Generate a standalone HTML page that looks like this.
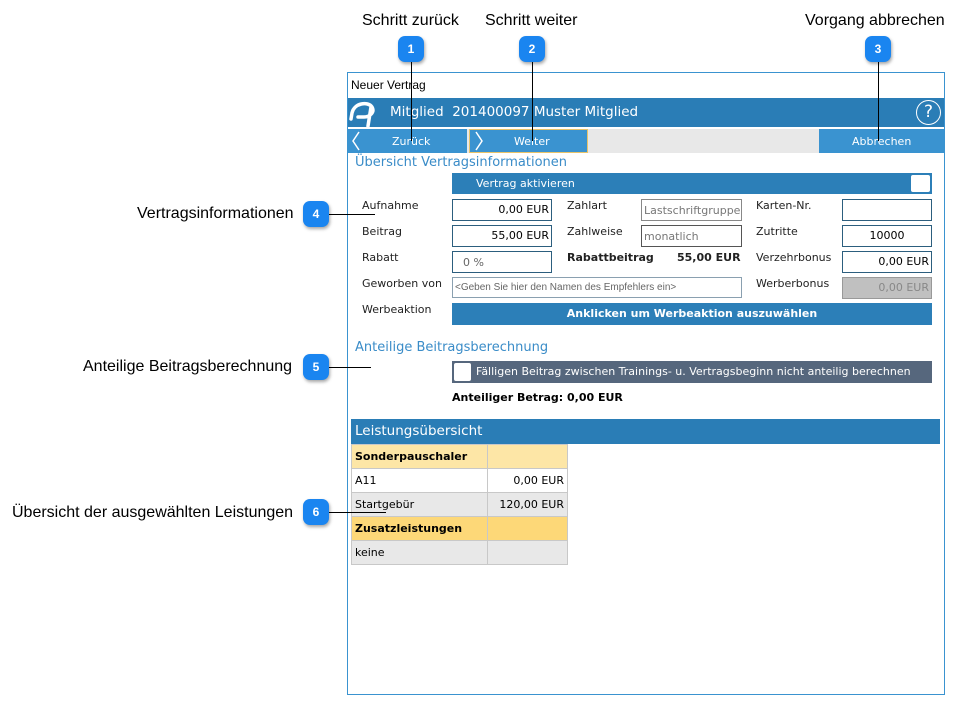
<!DOCTYPE html>
<html><head><meta charset="utf-8"><style>
*{margin:0;padding:0;box-sizing:border-box}
body{width:965px;height:704px;background:#fff;position:relative;font-family:"DejaVu Sans","Liberation Sans",sans-serif;overflow:hidden}
.a{position:absolute}
.lbl{font-family:"Liberation Sans",sans-serif;font-size:16px;color:#000;white-space:nowrap}
.badge{position:absolute;width:26px;height:26px;border-radius:7px;background:#1a85f0;color:#fff;font:bold 12px "Liberation Sans",sans-serif;text-align:center;line-height:26px;box-shadow:1px 2px 3px rgba(0,0,0,.35)}
.ln{position:absolute;background:#000}
.t{position:absolute;font-size:11px;color:#222;white-space:nowrap}
.in{position:absolute;height:22px;border:1px solid #2c5e7e;background:#fff;font-size:11px;line-height:20px;padding:0 2px;white-space:nowrap;overflow:hidden}
.r{text-align:right}
td{font-size:11px;height:24px;border:1px solid #c8c8c8;padding:0 3px;white-space:nowrap}
</style></head><body>
<div class="a lbl" style="left:362px;top:12px">Schritt zurück</div>
<div class="a lbl" style="left:485px;top:12px">Schritt weiter</div>
<div class="a lbl" style="left:805px;top:12px">Vorgang abbrechen</div>
<div class="a lbl" style="left:137px;top:205px">Vertragsinformationen</div>
<div class="a lbl" style="left:83px;top:358px">Anteilige Beitragsberechnung</div>
<div class="a lbl" style="left:12px;top:504px">Übersicht der ausgewählten Leistungen</div>

<div class="a" style="left:347px;top:72px;width:598px;height:623px;border:1px solid #3a93d0"></div>
<div class="t" style="left:351px;top:78px;font-family:'Liberation Sans',sans-serif;font-size:12px;color:#000">Neuer Vertrag</div>
<div class="a" style="left:348px;top:98px;width:596px;height:29px;background:#2a7db6"></div>
<svg class="a" style="left:348px;top:99px" width="30" height="28"><path d="M4 14 C6 4 20 2 24 8 C27 13 22 18 16 18 L10 18 M23 8 L20 27 M4 14 L3 20" stroke="#fff" stroke-width="3.5" fill="none" stroke-linecap="round"/></svg>
<div class="t" style="left:390px;top:104px;font-size:13.5px;color:#fff">Mitglied&nbsp; 201400097 Muster Mitglied</div>
<div class="a" style="left:916px;top:100px;width:25px;height:25px;border:1.5px solid #fff;border-radius:50%;color:#fff;font-size:17px;text-align:center;line-height:22px">?</div>
<div class="a" style="left:348px;top:129px;width:596px;height:24px;background:#e8e8e8"></div>
<div class="a" style="left:348px;top:129px;width:119px;height:24px;background:#3a93d0"></div>
<div class="a" style="left:469px;top:129px;width:119px;height:24px;background:#3a93d0;border:1px solid #e8c36a"></div>
<div class="a" style="left:819px;top:129px;width:125px;height:24px;background:#3a93d0"></div>
<svg class="a" style="left:350px;top:130px" width="12" height="22"><path d="M9 2 L3 11 L9 20" stroke="#fff" stroke-width="1.5" fill="none"/></svg>
<svg class="a" style="left:473px;top:130px" width="12" height="22"><path d="M3 2 L9 11 L3 20" stroke="#fff" stroke-width="1.5" fill="none"/></svg>
<div class="t" style="left:392px;top:135px;color:#fff">Zurück</div>
<div class="t" style="left:514px;top:135px;color:#fff">Weiter</div>
<div class="t" style="left:852px;top:135px;color:#fff">Abbrechen</div>

<div class="t" style="left:355px;top:155px;font-size:13px;color:#3a8cc8">Übersicht Vertragsinformationen</div>
<div class="a" style="left:452px;top:173px;width:480px;height:21px;background:#2c7fb8"></div>
<div class="t" style="left:476px;top:177px;color:#fff">Vertrag aktivieren</div>
<div class="a" style="left:911px;top:175px;width:19px;height:17px;background:#fff;border-radius:2px"></div>

<div class="t" style="left:362px;top:199px">Aufnahme</div>
<div class="t" style="left:362px;top:225px">Beitrag</div>
<div class="t" style="left:362px;top:251px">Rabatt</div>
<div class="t" style="left:362px;top:277px">Geworben von</div>
<div class="t" style="left:362px;top:303px">Werbeaktion</div>
<div class="in r" style="left:452px;top:199px;width:100px">0,00 EUR</div>
<div class="in r" style="left:452px;top:225px;width:100px">55,00 EUR</div>
<div class="in" style="left:452px;top:251px;width:100px;color:#666;padding-left:10px;line-height:22px">0 %</div>
<div class="in" style="left:452px;top:277px;width:290px;height:21px;border-color:#8aa0b0;color:#666;font-size:10px;font-family:'Liberation Sans',sans-serif">&lt;Geben Sie hier den Namen des Empfehlers ein&gt;</div>
<div class="a" style="left:452px;top:303px;width:480px;height:22px;background:#2c7fb8;color:#fff;font-size:11px;font-weight:bold;text-align:center;line-height:22px">Anklicken um Werbeaktion auszuwählen</div>

<div class="t" style="left:567px;top:199px">Zahlart</div>
<div class="t" style="left:567px;top:225px">Zahlweise</div>
<div class="t" style="left:567px;top:251px;font-weight:bold">Rabattbeitrag</div>
<div class="t" style="left:677px;top:251px;font-weight:bold">55,00 EUR</div>
<div class="in" style="left:641px;top:199px;width:101px;border-color:#888;color:#777;line-height:22px">Lastschriftgruppe</div>
<div class="in" style="left:641px;top:225px;width:101px;border-color:#555;color:#777;line-height:22px">monatlich</div>

<div class="t" style="left:756px;top:199px">Karten-Nr.</div>
<div class="t" style="left:756px;top:225px">Zutritte</div>
<div class="t" style="left:756px;top:251px">Verzehrbonus</div>
<div class="t" style="left:756px;top:277px">Werberbonus</div>
<div class="in" style="left:842px;top:199px;width:90px"></div>
<div class="in" style="left:842px;top:225px;width:90px;text-align:center">10000</div>
<div class="in r" style="left:842px;top:251px;width:90px">0,00 EUR</div>
<div class="in r" style="left:842px;top:277px;width:90px;background:#c0c0c0;border-color:#999;color:#888">0,00 EUR</div>

<div class="t" style="left:355px;top:340px;font-size:13px;color:#3a8cc8">Anteilige Beitragsberechnung</div>
<div class="a" style="left:452px;top:361px;width:480px;height:22px;background:#56677d"></div>
<div class="a" style="left:454px;top:363px;width:17px;height:18px;background:#fff;border-radius:2px"></div>
<div class="t" style="left:476px;top:365px;color:#fff">Fälligen Beitrag zwischen Trainings- u. Vertragsbeginn nicht anteilig berechnen</div>
<div class="t" style="left:452px;top:391px;font-weight:bold;color:#000">Anteiliger Betrag: 0,00 EUR</div>

<div class="a" style="left:351px;top:419px;width:589px;height:25px;background:#2a7db6;color:#fff;font-size:13.5px;line-height:25px;padding-left:4px">Leistungsübersicht</div>
<table class="a" style="left:351px;top:444px;border-collapse:collapse;width:217px">
<tr style="background:#fde6a6"><td style="width:136px;font-weight:bold">Sonderpauschaler</td><td></td></tr>
<tr style="background:#fff"><td>A11</td><td class="r">0,00 EUR</td></tr>
<tr style="background:#e8e8e8"><td>Startgebür</td><td class="r">120,00 EUR</td></tr>
<tr style="background:#fdd878"><td style="font-weight:bold">Zusatzleistungen</td><td></td></tr>
<tr style="background:#e8e8e8"><td>keine</td><td></td></tr>
</table>

<div class="ln" style="left:411px;top:62px;width:1px;height:79px"></div>
<div class="ln" style="left:532px;top:62px;width:1px;height:79px"></div>
<div class="ln" style="left:878px;top:62px;width:1px;height:79px"></div>
<div class="ln" style="left:329px;top:214px;width:46px;height:1px"></div>
<div class="ln" style="left:329px;top:367px;width:42px;height:1px"></div>
<div class="ln" style="left:329px;top:512px;width:57px;height:1px"></div>
<div class="badge" style="left:398px;top:36px">1</div>
<div class="badge" style="left:519px;top:36px">2</div>
<div class="badge" style="left:865px;top:36px">3</div>
<div class="badge" style="left:303px;top:201px">4</div>
<div class="badge" style="left:303px;top:354px">5</div>
<div class="badge" style="left:303px;top:499px">6</div>
</body></html>
